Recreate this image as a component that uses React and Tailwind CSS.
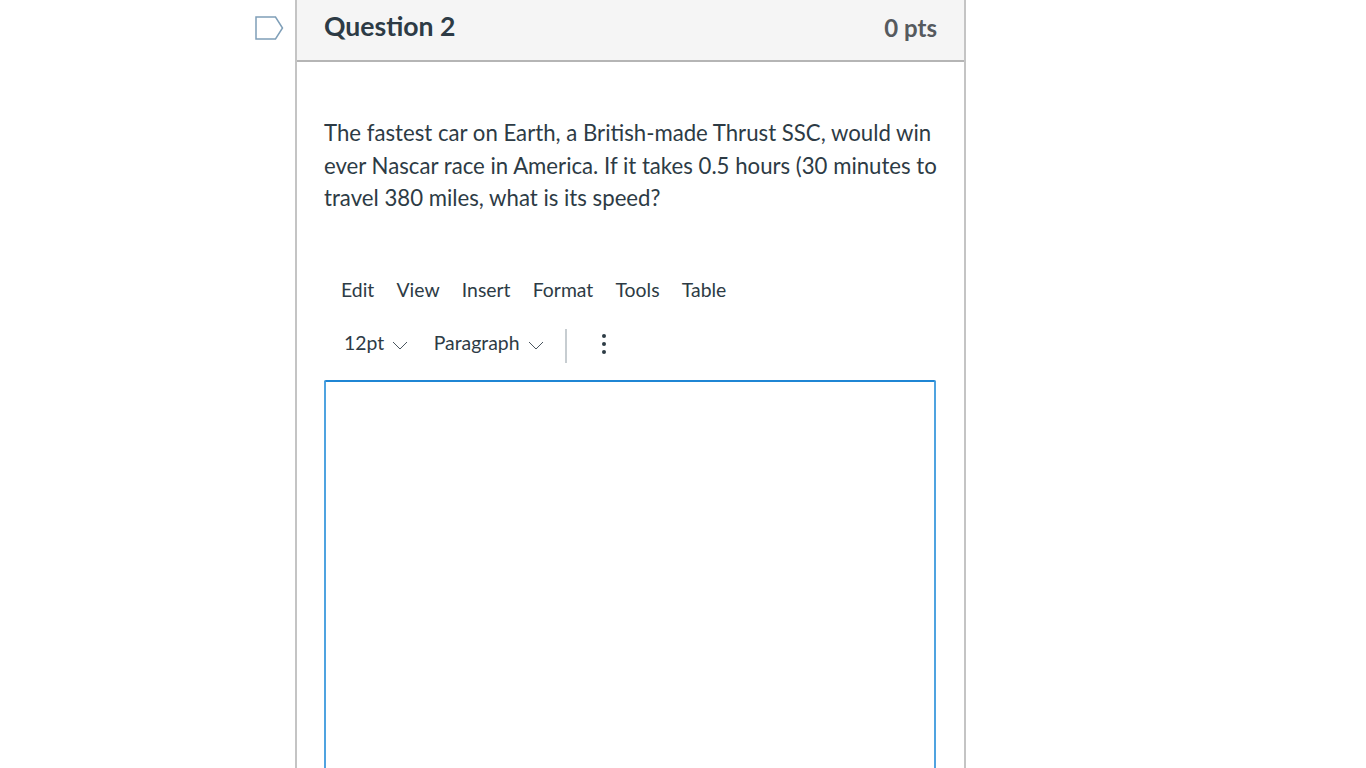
import React from "react";

function Chevron() {
  return (
    <svg width="16" height="9" viewBox="0 0 16 9" fill="none" className="ml-2 mt-[4px]">
      <path d="M1 1 L8 8 L15 1" stroke="#4a555e" strokeWidth="1" />
    </svg>
  );
}

export default function App() {
  return (
    <div className="h-[768px] overflow-hidden bg-white pl-[255px] flex font-['Lato','Liberation_Sans',sans-serif] text-[#2d3b45]">
      <div className="w-[40px] shrink-0 pt-[16px]">
        <svg width="29" height="24" viewBox="0 0 29 24" fill="none">
          <path d="M1 1 H20.5 L27.5 12 L20.5 23 H1 Z" stroke="#7f9fb8" strokeWidth="1.5" />
        </svg>
      </div>
      <div className="w-[671px] shrink-0 border-x-2 border-[#c4c4c4] h-[768px]">
        <div className="h-[62px] bg-[#f5f5f5] border-b-2 border-[#b5b5b5] flex items-center justify-between pl-[27px] pr-[27px]">
          <h2 className="text-[26.6px] font-bold leading-none mb-[7px]">Question 2</h2>
          <div className="text-[24px] font-bold text-[#565a5e] leading-none mb-[4px]">0 pts</div>
        </div>
        <div className="pl-[27px] pr-[27px]">
          <p className="mt-[55px] text-[22.2px] leading-[32.5px] w-[620px]">
            The fastest car on Earth, a British-made Thrust SSC, would win ever Nascar race in America. If it takes 0.5 hours (30 minutes to travel 380 miles, what is its speed?
          </p>
          <div className="mt-[61px] pl-[17px] flex gap-[22.2px] text-[19.4px] leading-[28px]">
            <span>Edit</span>
            <span>View</span>
            <span>Insert</span>
            <span>Format</span>
            <span>Tools</span>
            <span>Table</span>
          </div>
          <div className="mt-[23px] pl-[20px] flex items-center h-[34px] text-[19.4px]">
            <span className="mb-[2px]">12pt</span>
            <Chevron />
            <span className="ml-[25.5px] mb-[2px]">Paragraph</span>
            <Chevron />
            <div className="ml-[21px] mt-[4px] w-[2px] h-[34px] bg-[#c7cdd1]" />
            <svg width="6" height="22" viewBox="0 0 6 22" className="ml-[34px]" fill="#2d3b45">
              <circle cx="3" cy="3" r="2" />
              <circle cx="3" cy="11" r="2" />
              <circle cx="3" cy="19" r="2" />
            </svg>
          </div>
          <div className="mt-[19px] w-[612px] h-[500px] border-2 border-[#4fa3e0] border-t-[#1f86d4] rounded-[2px]" />
        </div>
      </div>
    </div>
  );
}
